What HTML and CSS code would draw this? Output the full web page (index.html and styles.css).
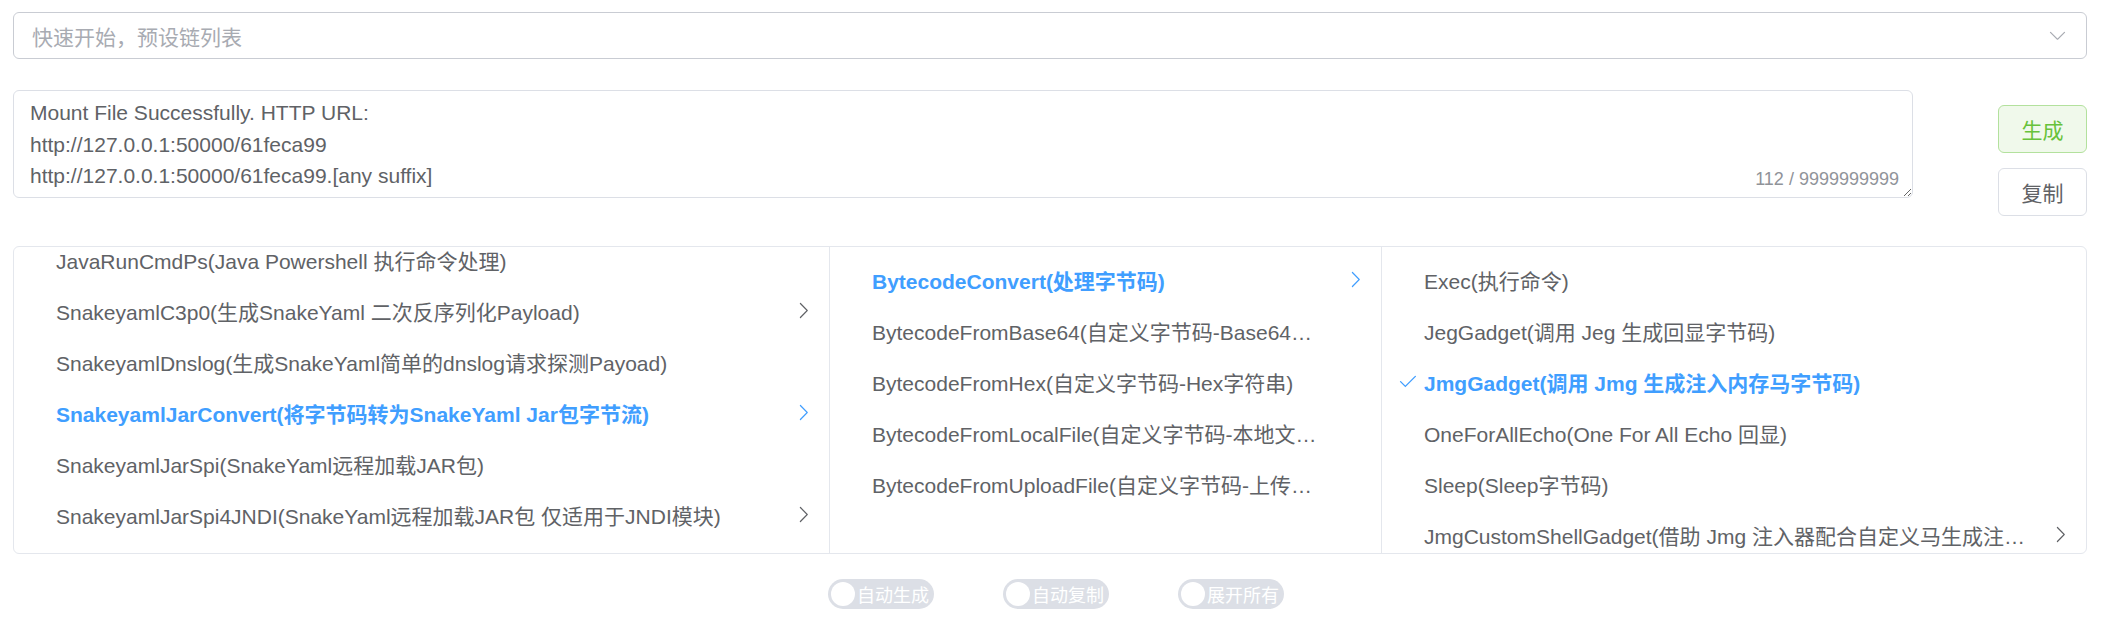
FILE: index.html
```html
<!DOCTYPE html>
<html lang="zh-CN">
<head>
    <meta charset="UTF-8">
    <title>Payload Chain</title>
    <link rel="stylesheet" href="styles.css">
</head>
<body>

    <!-- preset chain select -->
    <div class="chain-select">
        <span class="placeholder">快速开始，预设链列表</span>
        <svg class="select-arrow" viewBox="0 0 1024 1024"><path d="M831.872 340.864 512 652.672 192.128 340.864a30.592 30.592 0 0 0-42.752 0 29.12 29.12 0 0 0 0 41.6L489.664 714.24a32 32 0 0 0 44.672 0l340.288-331.712a29.12 29.12 0 0 0 0-41.728 30.592 30.592 0 0 0-42.752 0z"/></svg>
    </div>

    <!-- output + actions -->
    <div class="output-row">
        <div class="text-wrap">
            <textarea class="output" spellcheck="false">Mount File Successfully. HTTP URL:
http://127.0.0.1:50000/61feca99
http://127.0.0.1:50000/61feca99.[any suffix]</textarea>
            <span class="word-count">112 / 9999999999</span>
        </div>
        <div class="actions">
            <button class="btn btn-success">生成</button>
            <button class="btn">复制</button>
        </div>
    </div>

    <!-- cascader panel -->
    <div class="cascader">
        <div class="menu menu-first">
            <ul class="menu-list scrolled">
                <li class="node"><span class="label">JavaRunCmdPs(Java Powershell 执行命令处理)</span></li>
                <li class="node"><span class="label">SnakeyamlC3p0(生成SnakeYaml 二次反序列化Payload)</span>
                    <svg class="icon arrow" viewBox="0 0 1024 1024"><path d="M340.864 149.312a30.592 30.592 0 0 0 0 42.752L652.736 512 340.864 831.872a30.592 30.592 0 0 0 0 42.752 29.12 29.12 0 0 0 41.728 0L714.24 534.336a32 32 0 0 0 0-44.672L382.592 149.376a29.12 29.12 0 0 0-41.728 0z"/></svg></li>
                <li class="node"><span class="label">SnakeyamlDnslog(生成SnakeYaml简单的dnslog请求探测Payoad)</span></li>
                <li class="node active"><span class="label">SnakeyamlJarConvert(将字节码转为SnakeYaml Jar包字节流)</span>
                    <svg class="icon arrow" viewBox="0 0 1024 1024"><path d="M340.864 149.312a30.592 30.592 0 0 0 0 42.752L652.736 512 340.864 831.872a30.592 30.592 0 0 0 0 42.752 29.12 29.12 0 0 0 41.728 0L714.24 534.336a32 32 0 0 0 0-44.672L382.592 149.376a29.12 29.12 0 0 0-41.728 0z"/></svg></li>
                <li class="node"><span class="label">SnakeyamlJarSpi(SnakeYaml远程加载JAR包)</span></li>
                <li class="node"><span class="label">SnakeyamlJarSpi4JNDI(SnakeYaml远程加载JAR包 仅适用于JNDI模块)</span>
                    <svg class="icon arrow" viewBox="0 0 1024 1024"><path d="M340.864 149.312a30.592 30.592 0 0 0 0 42.752L652.736 512 340.864 831.872a30.592 30.592 0 0 0 0 42.752 29.12 29.12 0 0 0 41.728 0L714.24 534.336a32 32 0 0 0 0-44.672L382.592 149.376a29.12 29.12 0 0 0-41.728 0z"/></svg></li>
            </ul>
        </div>
        <div class="menu menu-second">
            <ul class="menu-list">
                <li class="node active"><span class="label">BytecodeConvert(处理字节码)</span>
                    <svg class="icon arrow" viewBox="0 0 1024 1024"><path d="M340.864 149.312a30.592 30.592 0 0 0 0 42.752L652.736 512 340.864 831.872a30.592 30.592 0 0 0 0 42.752 29.12 29.12 0 0 0 41.728 0L714.24 534.336a32 32 0 0 0 0-44.672L382.592 149.376a29.12 29.12 0 0 0-41.728 0z"/></svg></li>
                <li class="node"><span class="label">BytecodeFromBase64(自定义字节码-Base64…</span></li>
                <li class="node"><span class="label">BytecodeFromHex(自定义字节码-Hex字符串)</span></li>
                <li class="node"><span class="label">BytecodeFromLocalFile(自定义字节码-本地文…</span></li>
                <li class="node"><span class="label">BytecodeFromUploadFile(自定义字节码-上传…</span></li>
            </ul>
        </div>
        <div class="menu menu-last">
            <ul class="menu-list">
                <li class="node"><span class="label">Exec(执行命令)</span></li>
                <li class="node"><span class="label">JegGadget(调用 Jeg 生成回显字节码)</span></li>
                <li class="node active">
                    <svg class="icon check" viewBox="0 0 1024 1024"><path d="M406.656 706.944 195.84 496.256a32 32 0 1 0-45.248 45.248l256 256 512-512a32 32 0 0 0-45.248-45.248L406.592 706.944z"/></svg>
                    <span class="label">JmgGadget(调用 Jmg 生成注入内存马字节码)</span></li>
                <li class="node"><span class="label">OneForAllEcho(One For All Echo 回显)</span></li>
                <li class="node"><span class="label">Sleep(Sleep字节码)</span></li>
                <li class="node"><span class="label">JmgCustomShellGadget(借助 Jmg 注入器配合自定义马生成注…</span>
                    <svg class="icon arrow" viewBox="0 0 1024 1024"><path d="M340.864 149.312a30.592 30.592 0 0 0 0 42.752L652.736 512 340.864 831.872a30.592 30.592 0 0 0 0 42.752 29.12 29.12 0 0 0 41.728 0L714.24 534.336a32 32 0 0 0 0-44.672L382.592 149.376a29.12 29.12 0 0 0-41.728 0z"/></svg></li>
            </ul>
        </div>
    </div>

    <!-- switches -->
    <div class="switches">
        <span class="switch"><span class="switch-action"></span><span class="switch-text">自动生成</span></span>
        <span class="switch"><span class="switch-action"></span><span class="switch-text">自动复制</span></span>
        <span class="switch"><span class="switch-action"></span><span class="switch-text">展开所有</span></span>
    </div>

</body>
</html>
```

FILE: styles.css
```css
body {
    margin: 0;
    padding: 12px 26px 0 13px;
    background: #ffffff;
    font-family: 'Liberation Sans', 'Noto Sans CJK SC', sans-serif;
    font-size: 21px;
    color: #606266;
}

/* select */
.chain-select {
    height: 47px;
    box-sizing: border-box;
    border: 1px solid #c9ccd3;
    border-radius: 6px;
    display: flex;
    align-items: center;
    padding: 0 18px 0 18px;
}

.chain-select .placeholder {
    flex: 1;
    color: #a8abb2;
}

.select-arrow {
    width: 21px;
    height: 21px;
    fill: #a8abb2;
}

/* textarea row */
.output-row {
    display: flex;
    align-items: flex-start;
    margin-top: 31px;
}

.text-wrap {
    flex: 1;
    position: relative;
}

.output {
    display: block;
    width: 100%;
    height: 108px;
    box-sizing: border-box;
    padding: 6px 16px;
    border: 1px solid #dcdfe6;
    border-radius: 6px;
    font-family: 'Liberation Sans', 'Noto Sans CJK SC', sans-serif;
    font-size: 21px;
    line-height: 31.5px;
    color: #606266;
    resize: vertical;
    overflow: hidden;
    outline: none;
}

.word-count {
    position: absolute;
    right: 14px;
    bottom: 8px;
    font-size: 18px;
    line-height: 21px;
    color: #909399;
    background: #ffffff;
}

.actions {
    width: 89px;
    margin-left: 85px;
    margin-top: 15px;
    display: flex;
    flex-direction: column;
    gap: 15px;
}

.btn {
    height: 48px;
    box-sizing: border-box;
    border: 1px solid #dcdfe6;
    border-radius: 6px;
    background: #ffffff;
    color: #606266;
    font-family: 'Liberation Sans', 'Noto Sans CJK SC', sans-serif;
    font-size: 21px;
    padding: 0;
    cursor: pointer;
}

.btn-success {
    background: #f0f9eb;
    border-color: #b3e19d;
    color: #67c23a;
}

/* cascader */
.cascader {
    margin-top: 30px;
    height: 308px;
    box-sizing: border-box;
    border: 1px solid #e4e7ed;
    border-radius: 6px;
    display: flex;
    overflow: hidden;
}

.menu {
    height: 100%;
    overflow: hidden;
    box-sizing: border-box;
    border-right: 1px solid #e4e7ed;
}

.menu-first {
    width: 816px;
}

.menu-second {
    width: 552px;
}

.menu-last {
    flex: 1;
    border-right: none;
}

.menu-list {
    list-style: none;
    margin: 0;
    padding: 7px 0;
}

.menu-list.scrolled {
    margin-top: -20px;
}

.node {
    position: relative;
    height: 51px;
    display: flex;
    align-items: center;
    padding: 0 45px 0 30px;
    color: #606266;
}

.node .label {
    flex: 1;
    padding: 0 12px;
    white-space: nowrap;
    overflow: hidden;
    text-overflow: ellipsis;
}

.node.active {
    color: #409eff;
    font-weight: bold;
}

.icon {
    width: 21px;
    height: 21px;
    fill: currentColor;
}

.icon.arrow {
    position: absolute;
    right: 15px;
}

.icon.check {
    position: absolute;
    left: 15px;
}

/* switches */
.switches {
    display: flex;
    justify-content: center;
    gap: 69px;
    margin-top: 25px;
    padding-left: 12px;
}

.switch {
    display: inline-flex;
    align-items: center;
    height: 30px;
    box-sizing: border-box;
    padding: 0 5px 0 3px;
    border-radius: 15px;
    background: #dcdfe6;
}

.switch-action {
    width: 24px;
    height: 24px;
    border-radius: 50%;
    background: #ffffff;
}

.switch-text {
    margin-left: 2px;
    font-size: 18px;
    color: #ffffff;
}
```
